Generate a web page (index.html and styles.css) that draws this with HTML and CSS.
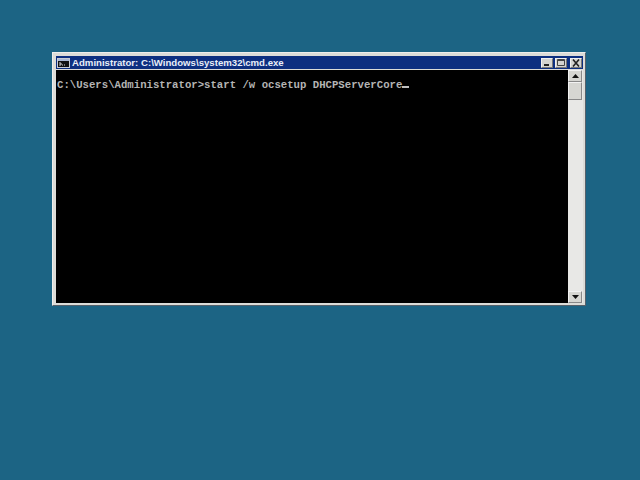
FILE: index.html
```html
<!DOCTYPE html>
<html lang="en">
<head>
<meta charset="utf-8">
<title>cmd.exe</title>
<link rel="stylesheet" href="styles.css">
</head>
<body>
<div class="window">
  <div class="titlebar">
    <svg class="appicon" width="13" height="10" viewBox="0 0 13 10">
      <rect x="0.5" y="0.5" width="12" height="9" fill="#111" stroke="#c8ccd4"/>
      <rect x="1" y="1" width="11" height="2" fill="#aab8d4"/>
      <path d="M2 5h2v2h-2M5 7h1M7 7h1" stroke="#d8d8d8" fill="none"/>
    </svg>
    <span class="title">Administrator: C:\Windows\system32\cmd.exe</span>
    <div class="buttons">
      <div class="btn"><svg width="10" height="8" viewBox="0 0 10 8"><rect x="2" y="5" width="5" height="2" fill="#222"/></svg></div>
      <div class="btn"><svg width="10" height="8" viewBox="0 0 10 8"><path d="M1.500 0.500h7v6h-7z M1 1.500h8" fill="none" stroke="#444"/></svg></div>
      <div class="btn close"><svg width="10" height="8" viewBox="0 0 10 8"><path d="M2 0.500l6 7M8 0.500L2 7.500" fill="none" stroke="#222" stroke-width="1.600"/></svg></div>
    </div>
  </div>
  <div class="body">
    <div class="console"><span>C:\Users\Administrator&gt;start /w ocsetup DHCPServerCore</span><span class="cursor"></span></div>
    <div class="scrollbar">
      <div class="arrow"><svg width="7" height="4" viewBox="0 0 7 4"><path d="M3.500 0L7 4H0z" fill="#111"/></svg></div>
      <div class="thumb"></div>
      <div class="track"></div>
      <div class="arrow"><svg width="7" height="4" viewBox="0 0 7 4"><path d="M0 0h7L3.500 4z" fill="#111"/></svg></div>
    </div>
  </div>
</div>
</body>
</html>
```
FILE: styles.css
```css
html, body {
  margin: 0;
  padding: 0;
  width: 640px;
  height: 480px;
  overflow: hidden;
}
body {
  background: #1c6484;
  padding: 52px 0 0 52px;
  box-sizing: border-box;
}
.window {
  width: 534px;
  height: 254px;
  box-sizing: border-box;
  background: #dcdcd8;
  border: 1px solid #eeeeec;
  border-right-color: #55606a;
  border-bottom-color: #55606a;
  padding: 3px 2px 2px 3px;
  display: flex;
  flex-direction: column;
}
.titlebar {
  height: 13px;
  flex: none;
  background: #0d2f80;
  display: flex;
  align-items: center;
  margin-bottom: 1px;
}
.appicon {
  flex: none;
  margin-left: 1px;
}
.title {
  font: bold 9.65px/13px "Liberation Sans", Arial, sans-serif;
  margin-left: 2px;
  white-space: nowrap;
  color: #e8eef8;
}
.buttons {
  margin-left: auto;
  display: flex;
  gap: 2px;
  margin-right: 1px;
}
.btn {
  width: 12px;
  height: 10px;
  box-sizing: border-box;
  background: #d4d4d0;
  border: 1px solid #f0f0f0;
  border-right-color: #777;
  border-bottom-color: #777;
  display: flex;
  align-items: center;
  justify-content: center;
}
.close {
  margin-left: 1px;
}
.body {
  flex: 1;
  display: flex;
  min-height: 0;
}
.console {
  flex: 1;
  background: #000;
  color: #b4b4b4;
  font: bold 10.67px/13px "Liberation Mono", "Courier New", monospace;
  padding: 9px 0 0 1px;
  white-space: pre;
}
.cursor {
  display: inline-block;
  width: 7px;
  height: 2px;
  background: #c0c0c0;
}
.scrollbar {
  width: 15px;
  flex: none;
  box-sizing: border-box;
  padding-right: 1px;
  background: #e8e8e6;
  display: flex;
  flex-direction: column;
}
.arrow {
  height: 12px;
  flex: none;
  box-sizing: border-box;
  background: #d6d6d2;
  border: 1px solid #f2f2f2;
  border-right-color: #888;
  border-bottom-color: #888;
  display: flex;
  align-items: center;
  justify-content: center;
}
.thumb {
  height: 18px;
  flex: none;
  box-sizing: border-box;
  background: #d6d6d2;
  border: 1px solid #f2f2f2;
  border-right-color: #888;
  border-bottom-color: #888;
}
.track {
  flex: 1;
}
```
